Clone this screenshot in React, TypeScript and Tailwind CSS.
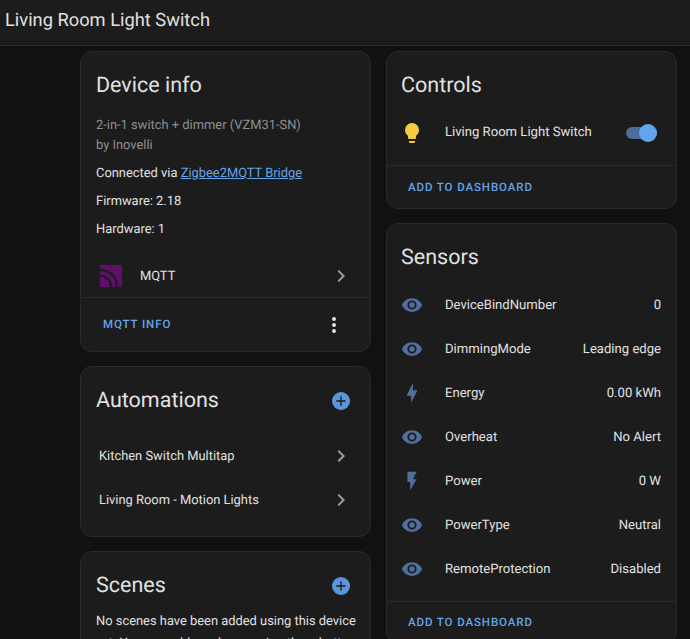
const EYE = "M12,9A3,3 0 0,0 9,12A3,3 0 0,0 12,15A3,3 0 0,0 15,12A3,3 0 0,0 12,9M12,17A5,5 0 0,1 7,12A5,5 0 0,1 12,7A5,5 0 0,1 17,12A5,5 0 0,1 12,17M12,4.5C7,4.5 2.73,7.61 1,12C2.73,16.39 7,19.5 12,19.5C17,19.5 21.27,16.39 23,12C21.27,7.61 17,4.5 12,4.5Z";
const BOLT = "M11 15H6L13 1V9H18L11 23V15Z";
const FLASH = "M7,2V13H10V22L17,10H13L17,2H7Z";
const BULB = "M12,2A7,7 0 0,0 5,9C5,11.38 6.19,13.47 8,14.74V17A1,1 0 0,0 9,18H15A1,1 0 0,0 16,17V14.74C17.81,13.47 19,11.38 19,9A7,7 0 0,0 12,2M9,21A1,1 0 0,0 10,22H14A1,1 0 0,0 15,21V20H9V21Z";
const DOTS = "M12,16A2,2 0 0,1 14,18A2,2 0 0,1 12,20A2,2 0 0,1 10,18A2,2 0 0,1 12,16M12,10A2,2 0 0,1 14,12A2,2 0 0,1 12,14A2,2 0 0,1 10,12A2,2 0 0,1 12,10M12,4A2,2 0 0,1 14,6A2,2 0 0,1 12,8A2,2 0 0,1 10,6A2,2 0 0,1 12,4Z";
const CHEV = "M8.59,16.58L13.17,12L8.59,7.41L10,6L16,12L10,18L8.59,16.58Z";
const PLUS = "M19,13H13V19H11V13H5V11H11V5H13V11H19V13Z";

function Icon({ d, className }: { d: string; className?: string }) {
  return (
    <svg viewBox="0 0 24 24" className={className} fill="currentColor">
      <path d={d} />
    </svg>
  );
}

function Card({ children }: { children: React.ReactNode }) {
  return (
    <div className="rounded-xl border border-[#2a2a2a] bg-[#1c1c1c]">{children}</div>
  );
}

function Title({ children }: { children: React.ReactNode }) {
  return <h2 className="text-[21.5px] leading-8 text-[#e1e1e1]">{children}</h2>;
}

function Chevron() {
  return <Icon d={CHEV} className="h-6 w-6 text-[#9b9b9b]" />;
}

function AddCircle() {
  return (
    <div className="flex h-[18px] w-[18px] items-center justify-center rounded-full bg-[#5b96dc]">
      <Icon d={PLUS} className="h-4 w-4 text-[#1c1c1c]" />
    </div>
  );
}

function ActionLink({ children }: { children: React.ReactNode }) {
  return (
    <span className="text-[11.5px] font-medium tracking-[0.9px] text-[#64a4ea]">{children}</span>
  );
}

const SENSORS = [
  { d: EYE, name: "DeviceBindNumber", value: "0" },
  { d: EYE, name: "DimmingMode", value: "Leading edge" },
  { d: BOLT, name: "Energy", value: "0.00 kWh" },
  { d: EYE, name: "Overheat", value: "No Alert" },
  { d: FLASH, name: "Power", value: "0 W" },
  { d: EYE, name: "PowerType", value: "Neutral" },
  { d: EYE, name: "RemoteProtection", value: "Disabled" },
];

export default function App() {
  return (
    <div className="h-[639px] w-[690px] overflow-hidden bg-[#111111] font-['Roboto',sans-serif] text-[#e1e1e1] [text-rendering:geometricPrecision]">
      <header className="flex h-[46px] items-center border-b border-[#2a2a2a] bg-[#1c1c1c] pb-[3px] pl-[5px] text-[18.3px] text-[#e1e1e1]">
        Living Room Light Switch
      </header>

      <div className="flex gap-[15px] pl-20 pt-[5px]">
        <div className="flex w-[291px] flex-col gap-[14px] text-[12.9px]">
          <Card>
            <div className="px-[15px] pt-[18px]">
              <Title>Device info</Title>
              <div className="mt-[14px] text-[#8f8f8f]">
                <div className="leading-5">2-in-1 switch + dimmer (VZM31-SN)</div>
                <div className="leading-5">by Inovelli</div>
              </div>
              <div className="mt-2 leading-5">
                Connected via <span className="text-[#64a4ea] underline">Zigbee2MQTT Bridge</span>
              </div>
              <div className="mt-2 leading-5">Firmware: 2.18</div>
              <div className="mt-2 leading-5">Hardware: 1</div>
            </div>
            <div className="mt-[13px] flex h-11 items-center pl-[19px] pr-[17px] pt-px">
              <svg viewBox="0 0 22 22" className="h-[22px] w-[22px]">
                <rect width="22" height="22" fill="#5f0f68" />
                <path d="M0 5C10 5 17 12 17 22M0 11C7 11 11 16 11 22" fill="none" stroke="#1c1c1c" strokeWidth="2" />
                <path d="M14 0L22 0L22 8Z" fill="#5f0f68" />
              </svg>
              <span className="ml-[18px] flex-1 pt-[3px]">MQTT</span>
              <Chevron />
            </div>
            <div className="flex h-[54px] items-center justify-between border-t border-[#2a2a2a] pl-[22px] pr-[24px]">
              <ActionLink>MQTT INFO</ActionLink>
              <Icon d={DOTS} className="h-6 w-6 text-[#e1e1e1]" />
            </div>
          </Card>

          <Card>
            <div className="flex items-center justify-between pl-[15px] pr-5 pt-[18px]">
              <Title>Automations</Title>
              <AddCircle />
            </div>
            <div className="pb-[14px] pt-[17px]">
              <div className="flex h-11 items-center justify-between pl-[18px] pr-[17px]">
                <span className="pt-[2px]">Kitchen Switch Multitap</span>
                <Chevron />
              </div>
              <div className="flex h-11 items-center justify-between pl-[18px] pr-[17px]">
                <span className="pt-[2px]">Living Room - Motion Lights</span>
                <Chevron />
              </div>
            </div>
          </Card>

          <Card>
            <div className="flex items-center justify-between pl-[15px] pr-5 pt-[18px]">
              <Title>Scenes</Title>
              <AddCircle />
            </div>
            <p className="mt-[9px] pl-[15px] pr-[10px] leading-[22px]">
              No scenes have been added using this device yet. You can add one by pressing the + button above.
            </p>
          </Card>
        </div>

        <div className="flex w-[291px] flex-col gap-[14px] text-[13.1px]">
          <Card>
            <div className="pl-[14px] pt-[18px]">
              <Title>Controls</Title>
            </div>
            <div className="mt-[6px] flex h-12 items-center pl-[13px] pr-[19px] pt-px">
              <Icon d={BULB} className="h-6 w-6 text-[#f5cb42]" />
              <span className="ml-[21px] flex-1">Living Room Light Switch</span>
              <div className="relative h-3 w-[31px] rounded-full bg-[#4a6d9a]">
                <div className="absolute -top-[3px] right-0 h-[18px] w-[18px] rounded-full bg-[#64a4ea]" />
              </div>
            </div>
            <div className="mt-[9px] flex h-[43px] items-center border-t border-[#2a2a2a] pl-[21px] pt-px">
              <ActionLink>ADD TO DASHBOARD</ActionLink>
            </div>
          </Card>

          <Card>
            <div className="pl-[14px] pt-[18px]">
              <Title>Sensors</Title>
            </div>
            <div className="mt-[9px]">
              {SENSORS.map((s) => (
                <div key={s.name} className="flex h-11 items-center pl-[14px] pr-[15px]">
                  <Icon d={s.d} className="h-[22px] w-[22px] text-[#4f6f9f]" />
                  <span className="ml-[22px] flex-1 pt-[2px]">{s.name}</span>
                  <span className="pt-[2px]">{s.value}</span>
                </div>
              ))}
            </div>
            <div className="mt-[10px] flex h-[42px] items-center border-t border-[#2a2a2a] pl-[21px] pt-px">
              <ActionLink>ADD TO DASHBOARD</ActionLink>
            </div>
          </Card>
        </div>
      </div>
    </div>
  );
}
